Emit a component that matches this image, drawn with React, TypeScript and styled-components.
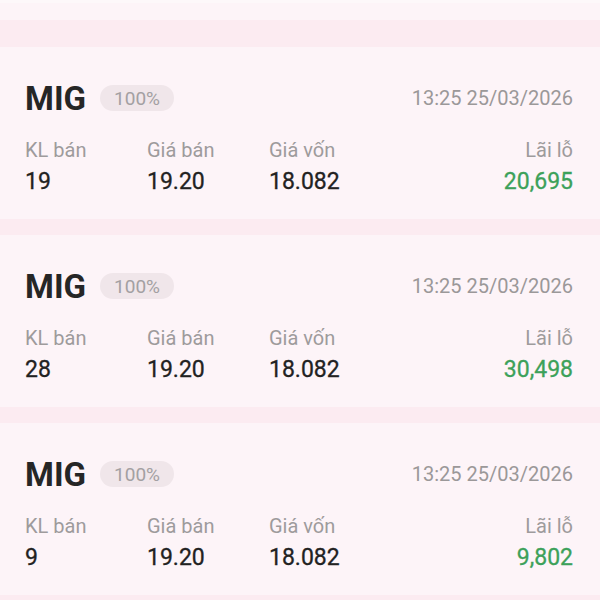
import React from "react";
import styled, { createGlobalStyle } from "styled-components";

const Global = createGlobalStyle`
  html, body { margin: 0; padding: 0; background: #fcebf1; }
  body { font-family: Roboto, "Noto Sans", "Liberation Sans", sans-serif; }
`;

const List = styled.div`
  display: flex;
  flex-direction: column;
  gap: 16px;
  width: 600px;
  background: #fcebf1;
`;

const Stub = styled.div`
  height: 20px;
  background: #fdf4f8;
  border-top: 3px solid #fdf8fa;
  box-sizing: border-box;
  margin-bottom: 11px;
`;

const Card = styled.div`
  background: #fdf4f8;
  height: 172px;
  box-sizing: border-box;
  padding: 33px 27px 0 25px;
  display: flex;
  flex-direction: column;
`;

const Header = styled.div`
  display: flex;
  align-items: center;
  height: 36px;
`;

const Symbol = styled.div`
  font-size: 33px;
  font-weight: 700;
  color: #262626;
`;

const Pill = styled.div`
  margin-left: 14px;
  height: 26px;
  padding: 0 14px;
  border-radius: 13px;
  background: #f0e6ea;
  color: #a3a0a2;
  font-size: 19px;
  display: flex;
  align-items: center;
`;

const Time = styled.div`
  margin-left: auto;
  font-size: 20px;
  color: #9b9899;
`;

const Grid = styled.div`
  margin-top: 22px;
  display: grid;
  grid-template-columns: 122px 122px 1fr 1fr;
  row-gap: 6px;
`;

const Label = styled.div<{ $right?: boolean }>`
  font-size: 20px;
  line-height: 24px;
  color: #9e9b9c;
  text-align: ${(p) => (p.$right ? "right" : "left")};
`;

const Value = styled.div<{ $right?: boolean; $green?: boolean }>`
  font-size: 23px;
  line-height: 28px;
  font-weight: 400;
  color: ${(p) => (p.$green ? "#3ca15a" : "#222222")};
  -webkit-text-stroke: 0.3px ${(p) => (p.$green ? "#3ca15a" : "#222222")};
  text-align: ${(p) => (p.$right ? "right" : "left")};
`;

const rows = [
  { kl: "19", pnl: "20,695" },
  { kl: "28", pnl: "30,498" },
  { kl: "9", pnl: "9,802" },
];

export default function App() {
  return (
    <>
      <Global />
      <List>
        <Stub />
        {rows.map((r, i) => (
          <Card key={i}>
            <Header>
              <Symbol>MIG</Symbol>
              <Pill>100%</Pill>
              <Time>13:25 25/03/2026</Time>
            </Header>
            <Grid>
              <Label>KL bán</Label>
              <Label>Giá bán</Label>
              <Label>Giá vốn</Label>
              <Label $right>Lãi lỗ</Label>
              <Value>{r.kl}</Value>
              <Value>19.20</Value>
              <Value>18.082</Value>
              <Value $right $green>{r.pnl}</Value>
            </Grid>
          </Card>
        ))}
      </List>
    </>
  );
}
